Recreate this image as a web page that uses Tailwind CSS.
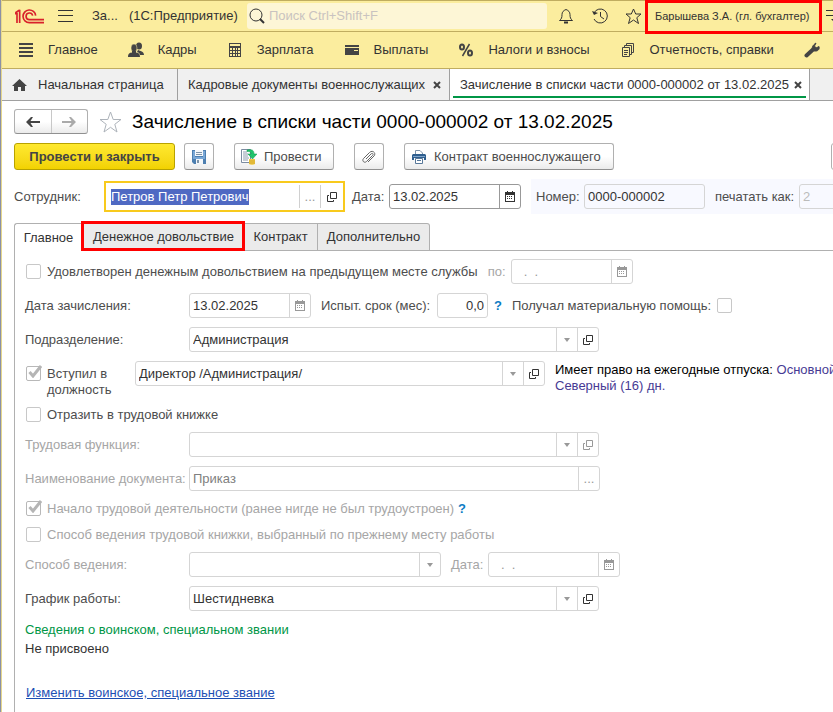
<!DOCTYPE html>
<html lang="ru">
<head>
  <meta charset="UTF-8">
  <meta name="viewport" content="width=device-width, initial-scale=1.0">
  <title>Зачисление в списки части 0000-000002 от 13.02.2025</title>
  <script src="https://cdn.jsdelivr.net/npm/@tailwindcss/browser@4"></script>
</head>
<body class="min-h-screen overflow-x-hidden bg-white font-['Liberation_Sans',Arial,sans-serif] text-[13px] leading-4 text-[#4d4d4d] whitespace-nowrap">

  <!-- Shared icons -->
  <svg class="hidden">
    <symbol id="open" viewBox="0 0 10 10"><path d="M3.5.5h6v6h-6zM2 3.5H.5v6h6V8" fill="none" stroke="currentColor"/></symbol>
    <symbol id="calendar" viewBox="0 0 10 11"><path fill="currentColor" fill-rule="evenodd" d="M0 1h2V0h1v1h4V0h1v1h2v10H0zM1 4v6h8V4zM2 5h1v1H2zM4 5h1v1H4zM6 5h1v1H6zM2 7h1v1H2zM4 7h1v1H4zM6 7h1v1H6z"/></symbol>
    <symbol id="caret" viewBox="0 0 6 4"><path d="M0 0h6L3 4z" fill="currentColor"/></symbol>
    <symbol id="check" viewBox="0 0 14 13"><path d="M1.500 7l3.500 4L13 1" fill="none" stroke="#b5b5b5" stroke-width="3"/></symbol>
    <symbol id="close" viewBox="0 0 8 8"><path d="M1 1l6 6M7 1L1 7" stroke="#444" stroke-width="2"/></symbol>
  </svg>

  <div class="min-h-screen border-l border-[#8b90a6]">
  <div class="min-h-screen border-l border-[#e5d78d]">

    <header class="flex h-8 items-center border-y border-[#c0ad60] bg-[#fbed9e] pl-[13px] text-[#333]">
      <svg class="w-[29px] h-[15px] shrink-0" viewBox="0 0 87 45" fill="none" stroke="#d8212b" stroke-width="5">
        <path d="M0 14h6v28M14 2v40M1 11L14 3"/>
        <path d="M62 20A19 19 0 1 0 43 41H87"/>
        <path d="M53 20A10 10 0 1 0 43 32H87"/>
      </svg>
      <button class="ml-3.5 shrink-0" aria-label="Меню">
        <svg class="w-[15px] h-3" viewBox="0 0 15 12" stroke="#333"><path d="M0 .5h15M0 5.500h15M0 11.500h15"/></svg>
      </button>
      <span class="ml-[19px]">За...</span>
      <span class="ml-[11px] w-[118px] shrink-0">(1С:Предприятие)</span>
      <label class="flex h-[26px] w-[300px] shrink-0 items-center rounded-[3px] bg-[#fdf6d6] pl-0.5">
        <svg class="size-4" viewBox="0 0 16 16" fill="none" stroke="#333"><circle cx="7" cy="7" r="6"/><path d="M11 11l4 4" stroke-width="2"/></svg>
        <input type="search" placeholder="Поиск Ctrl+Shift+F" class="ml-1 min-w-0 flex-1 bg-transparent outline-none placeholder:text-[#c9c3c0]">
      </label>
      <button class="ml-[11px] shrink-0" aria-label="Уведомления">
        <svg class="size-4" viewBox="0 0 16 16" fill="none" stroke="#333"><path d="M1.500 12.500C3.500 11 4 9.500 4 6.500 4 4 5.500 2.500 8 1.500c2.500 1 4 2.500 4 5 0 3 .5 4.500 2.500 6z"/><path d="M6 14.500h4" stroke-width="2"/></svg>
      </button>
      <button class="ml-[18px] shrink-0" aria-label="История">
        <svg class="w-[17px] h-4" viewBox="0 0 17 16" fill="none" stroke="#333"><path d="M2 5a7 7 0 1 1 0 6M8.500 4v4.500L12 11"/><path d="M0 3l2 4 4-2z" fill="#333" stroke="none"/></svg>
      </button>
      <button class="ml-4 shrink-0" aria-label="Избранное">
        <svg class="size-[17px]" viewBox="0 0 17 17" fill="none" stroke="#333"><path d="M8.500 1l2.200 5h5.300l-4.200 3.700L13.500 15.500l-5-3.500-5 3.500 1.700-5.800L1 6h5.300z"/></svg>
      </button>
      <button class="relative ml-[13px] w-[157px] shrink-0 text-left text-[11px]">Барышева З.А. (гл. бухгалтер)
        <span class="absolute -inset-x-[10px] -top-[8px] -bottom-[10px] border-3 border-[#f00]"></span>
      </button>
      <svg class="ml-[14px] w-4 h-3 shrink-0" viewBox="0 0 16 12" fill="#333"><path d="M0 0h16v1H0zM0 5h16v1H0zM5 9h6l-3 3z"/></svg>
    </header>

    <nav class="flex h-[37px] items-center gap-[30px] border-b border-[#c0ad60] bg-[#fbed9e] pl-4 text-[#333]">
      <a href="#" class="flex shrink-0 items-center gap-3.5">
        <svg class="size-4" viewBox="0 0 16 16" fill="#444"><path d="M1 1h14v2H1zM1 5h14v2H1zM1 9h14v2H1zM1 13h14v2H1z"/></svg>Главное</a>
      <a href="#" class="flex shrink-0 items-center gap-3.5">
        <svg class="size-4" viewBox="0 0 16 16" fill="#444"><ellipse cx="11" cy="4" rx="3" ry="3.500"/><path d="M10 8c2 1 6 1 6 5h-4c-.5-2-1-2.500-3-3z"/><ellipse cx="6" cy="6" rx="3" ry="4" stroke="#fbed9e" stroke-width=".5"/><path d="M4 9v1.500C2 11 0 11 0 15h12c0-4-2-4-4-4.500V9z"/></svg>Кадры</a>
      <a href="#" class="flex shrink-0 items-center gap-3.5">
        <svg class="size-4" viewBox="0 0 16 16"><path d="M2 1h12v14H2z" fill="#444"/><path d="M3 2h10v2H3zM3 6h2v2H3zM6 6h2v2H6zM9 6h1v2H9zM11 6h2v2h-2zM3 9h2v2H3zM6 9h2v2H6zM9 9h1v2H9zM11 9h2v2h-2zM3 12h2v2H3zM6 12h2v2H6zM9 12h1v2H9zM11 12h2v2h-2z" fill="#fbed9e"/></svg>Зарплата</a>
      <a href="#" class="flex shrink-0 items-center gap-3.5">
        <svg class="size-4" viewBox="0 0 16 16"><path d="M1 3h14v2H1zM1 6h14v7H1z" fill="#444"/><path d="M10 8h4v1h-4z" fill="#fbed9e"/></svg>Выплаты</a>
      <a href="#" class="flex shrink-0 items-center gap-3.5">
        <svg class="size-4" viewBox="0 0 16 16" fill="none" stroke="#444" stroke-width="2"><ellipse cx="4" cy="5" rx="2" ry="2.500"/><ellipse cx="12" cy="11" rx="2" ry="2.500"/><path d="M11.500 2l-7 12" stroke-width="1.500"/></svg>Налоги и взносы</a>
      <a href="#" class="flex shrink-0 items-center gap-3.5">
        <svg class="size-4" viewBox="0 0 16 16" fill="none" stroke="#444"><path d="M2.500 5.500h7v9h-7zM4.500 5V3.500h7v9H10M6.500 3V1.500h7v9H12M4 8.500h4M4 10.500h4M4 12.500h3"/></svg>Отчетность, справки</a>
      <a href="#" class="shrink-0" aria-label="Настройка">
        <svg class="size-4" viewBox="0 0 16 16"><path d="M2.500 13.500L9 7.500" stroke="#444" stroke-width="4" stroke-linecap="round"/><path d="M12 1L10.500 4l1.500 2 3-1.500c1 3-1.500 5-4.500 4.500S7 4 12 1z" fill="#444" stroke="#444"/></svg></a>
    </nav>

    <div class="flex h-8 border-b border-[#a0a0a0] bg-[#f0f0f0] text-[#333]">
      <button class="flex w-44 shrink-0 items-center gap-[11px] border-r border-[#a0a0a0] pl-2.5">
        <svg class="w-[15px] h-3" viewBox="0 0 15 12" fill="#444"><path d="M7.500 0L15 7h-2v5H9V8H6v4H2V7H0z"/></svg>Начальная страница</button>
      <button class="flex w-[272px] shrink-0 items-center justify-between border-r border-[#a0a0a0] pl-2.5 pr-2">Кадровые документы военнослужащих<svg class="size-2"><use href="#close"/></svg></button>
      <button class="flex w-[360px] shrink-0 border-r border-[#a0a0a0] bg-white px-[3px] pb-0.5">
        <span class="flex h-full w-full items-center justify-between border-b-2 border-[#009646] pl-[7px] pr-1 pt-1">Зачисление в списки части 0000-000002 от 13.02.2025<svg class="size-2"><use href="#close"/></svg></span>
      </button>
    </div>

    <main class="pl-3 pt-2">
      <div class="flex items-center">
        <div class="flex h-[25px] w-[74px] shrink-0 rounded-[3px] border border-[#b0b0b0] border-b-[#909090] bg-linear-to-b from-white from-50% to-[#ebebeb]">
          <button class="flex flex-1 items-center justify-center border-r border-[#c8c8c8] text-[#444]" aria-label="Назад"><svg class="w-3.5 h-2.5" viewBox="0 0 14 10" fill="currentColor"><path d="M0 5l5-5h2L4.500 4H14v2H4.500L7 10H5z"/></svg></button>
          <button class="flex flex-1 items-center justify-center text-[#aaa]" aria-label="Вперед"><svg class="w-3.5 h-2.5" viewBox="0 0 14 10" fill="currentColor"><path d="M14 5L9 0H7l2.500 4H0v2h9.500L7 10h2z"/></svg></button>
        </div>
        <svg class="ml-[11px] w-[23px] h-[22px] shrink-0" viewBox="0 0 23 22" fill="none" stroke="#adb3ba"><path d="M11.500 1l2.700 7.500H22l-6.200 4.800L18 21l-6.500-4.700L5 21l2.200-7.700L1 8.500h7.800z"/></svg>
        <h1 class="ml-2.5 text-[19px] leading-[25px] text-black">Зачисление в списки части 0000-000002 от 13.02.2025</h1>
      </div>

      <div class="mt-[9px] flex items-center">
        <button class="h-[27px] w-[161px] shrink-0 rounded-[3px] border border-[#b8a200] bg-linear-to-b from-[#ffe92e] to-[#f2d200] font-bold text-[#444]">Провести и закрыть</button>
        <button class="ml-[9px] flex h-[27px] w-[30px] shrink-0 items-center justify-center rounded-[3px] border border-[#b0b0b0] border-b-[#909090] bg-linear-to-b from-white from-50% to-[#ebebeb]" aria-label="Записать">
          <svg class="size-3.5" viewBox="0 0 14 14"><path d="M0 0h14v14H2l-2-2z" fill="#4d7fb0"/><path d="M1 1h2v6h8V1h2v8H1z" fill="#79a7d6"/><path d="M3 0h8v6H3zM4 9h7v5H4z" fill="#f4f7fa"/><path d="M4 2h6v1H4zM4 4h6v1H4zM5 10h2v3H5z" fill="#7d93a8"/></svg>
        </button>
        <button class="ml-5 flex h-[27px] w-[100px] shrink-0 items-center gap-[7px] rounded-[3px] border border-[#b0b0b0] border-b-[#909090] bg-linear-to-b from-white from-50% to-[#ebebeb] pl-1.5">
          <svg class="size-4" viewBox="0 0 16 16"><path d="M.5.5h9v13h-9z" fill="#fff" stroke="#7b8ca0"/><path d="M2 3h4M2 5h5M2 7h5M2 9h6M2 11h5" stroke="#8b9bad"/><path d="M6 1c5-1 7 0 7 4h3l-4.500 5L7 5h3c0-2-1-2.500-4-2.500z" fill="#1fc46b" stroke="#079447" stroke-width=".5"/><path d="M8 10h6v5c-1 1-5 1-6 0z" fill="#f0ca48"/><path d="M8 12h6M8 14h6" stroke="#c89c1c" stroke-width=".7"/></svg>
          Провести</button>
        <button class="ml-5 flex h-[27px] w-[30px] shrink-0 items-center justify-center rounded-[3px] border border-[#b0b0b0] border-b-[#909090] bg-linear-to-b from-white from-50% to-[#ebebeb]" aria-label="Файлы">
          <svg class="size-3.5" viewBox="0 0 14 14" fill="none" stroke="#666"><path d="M4 9l5-5c1.500-1.500 3 0 1.500 1.500l-6 6c-2 2-5-.5-3-3l6-6c3-3 7 .5 4.500 3.500l-6 6"/></svg>
        </button>
        <button class="ml-5 flex h-[27px] w-[210px] shrink-0 items-center gap-2 rounded-[3px] border border-[#b0b0b0] border-b-[#909090] bg-linear-to-b from-white from-50% to-[#ebebeb] pl-[7px]">
          <svg class="size-3.5" viewBox="0 0 14 14"><path d="M3.500 5V.5H8L10.500 3v2" fill="#fff" stroke="#7c93aa"/><path d="M1 4h12l1 1v5h-2V8H2v2H0V5z" fill="#2f5f8f"/><path d="M1 6h12v1H1z" fill="#7fa5cb"/><path d="M3.500 8.500h7v5h-7z" fill="#fff" stroke="#58789a"/><path d="M5 10.500h4" stroke="#58789a"/></svg>
          Контракт военнослужащего</button>
        <button class="ml-[217px] h-[27px] w-[30px] shrink-0 rounded-[3px] border border-[#b0b0b0]" aria-label="Еще"></button>
      </div>

      <div class="mt-[9px] flex h-[35px] items-center">
        <label for="employee" class="w-[90px] shrink-0">Сотрудник:</label>
        <div class="flex h-[31px] w-[241px] shrink-0 items-center border-2 border-[#f8ca1d] text-[#333]">
          <input id="employee" value="Петров Петр Петрович" class="min-w-0 flex-1 pl-[5px] outline-none selection:bg-[#4f69c3] selection:text-white">
          <button class="h-[23px] w-[21px] border-l border-[#d0d0d0] text-[#999]">...</button>
          <button class="flex h-[23px] w-[23px] items-center justify-center border-l border-[#d0d0d0]" aria-label="Открыть"><svg class="size-2.5"><use href="#open"/></svg></button>
        </div>
        <label for="date" class="ml-[7px] w-[37px] shrink-0">Дата:</label>
        <div class="flex h-[25px] w-[132px] shrink-0 rounded-[3px] border border-[#999] text-[#333]">
          <input id="date" value="13.02.2025" class="min-w-0 flex-1 pl-[3px] outline-none">
          <button class="flex w-[21px] items-center justify-center border-l border-[#999]" aria-label="Календарь"><svg class="w-2.5 h-[11px]"><use href="#calendar"/></svg></button>
        </div>
        <div class="ml-2.5 flex h-full min-w-0 flex-1 items-center overflow-hidden bg-[#f8f9ff] pl-[5px]">
          <label for="number" class="w-12 shrink-0">Номер:</label>
          <input id="number" value="0000-000002" readonly class="h-[25px] w-[121px] shrink-0 rounded-[3px] border border-[#d5d5d5] pl-[3px] text-[#333] outline-none">
          <label for="printas" class="ml-2.5 w-[84px] shrink-0">печатать как:</label>
          <input id="printas" value="2" disabled class="h-[25px] w-[121px] shrink-0 rounded-[3px] border border-[#d5d5d5] pl-[3px] text-[#bbb]">
        </div>
      </div>

      <div class="mt-[9px] flex h-7 text-[#333]">
        <button class="w-[69px] shrink-0 rounded-tl-[3px] border border-b-0 border-[#b0b0b0] border-r-transparent bg-white">Главное</button>
        <button class="relative w-[161px] shrink-0 border border-[#b0b0b0] bg-[#ebebeb]">Денежное довольствие
          <span class="absolute -left-[3px] -right-0.5 -top-[3px] -bottom-px border-3 border-[#f00]"></span>
        </button>
        <button class="w-[74px] shrink-0 border border-l-0 border-[#b0b0b0] bg-[#ebebeb]">Контракт</button>
        <button class="w-[112px] shrink-0 rounded-tr-[3px] border border-l-0 border-[#b0b0b0] bg-[#ebebeb]">Дополнительно</button>
        <div class="flex-1 border-b border-[#b0b0b0]"></div>
      </div>

      <section class="flex flex-col gap-[9px] border-l border-[#b0b0b0] pb-5 pl-2.5 pt-2">
        <div class="flex h-[25px] items-center">
          <label class="flex shrink-0 items-center gap-1.5 pl-px"><input type="checkbox" class="size-[15px] appearance-none rounded-[2px] border border-[#c8c8c8]">Удовлетворен денежным довольствием на предыдущем месте службы</label>
          <label for="until" class="ml-2.5 w-[23px] shrink-0 text-[#a6a6a6]">по:</label>
          <div class="flex h-[25px] w-[122px] shrink-0 rounded-[3px] border border-[#d5d5d5] text-[#999]">
            <input id="until" value=".  ." class="min-w-0 flex-1 pl-3 whitespace-pre outline-none">
            <button class="flex w-[21px] items-center justify-center border-l border-[#d5d5d5]" aria-label="Календарь"><svg class="w-2.5 h-[11px]"><use href="#calendar"/></svg></button>
          </div>
        </div>

        <div class="flex h-[25px] items-center">
          <label for="enrolled" class="w-[164px] shrink-0">Дата зачисления:</label>
          <div class="flex h-[25px] w-[122px] shrink-0 rounded-[3px] border border-[#d5d5d5] text-[#333]">
            <input id="enrolled" value="13.02.2025" class="min-w-0 flex-1 pl-[3px] outline-none">
            <button class="flex w-[21px] items-center justify-center border-l border-[#d5d5d5] text-[#999]" aria-label="Календарь"><svg class="w-2.5 h-[11px]"><use href="#calendar"/></svg></button>
          </div>
          <label for="trial" class="ml-2.5 w-[116px] shrink-0">Испыт. срок (мес):</label>
          <input id="trial" value="0,0" class="h-[25px] w-[51px] shrink-0 rounded-[3px] border border-[#d5d5d5] pr-[3px] text-right text-[#333] outline-none">
          <button class="ml-[6px] w-[18px] shrink-0 text-left font-bold text-[#0d7cc4]">?</button>
          <label for="aid" class="w-[205px] shrink-0">Получал материальную помощь:</label>
          <input id="aid" type="checkbox" class="size-[15px] shrink-0 appearance-none rounded-[2px] border border-[#c8c8c8]">
        </div>

        <div class="flex h-[25px] items-center">
          <label for="division" class="w-[164px] shrink-0">Подразделение:</label>
          <div class="flex h-[25px] w-[410px] shrink-0 rounded-[3px] border border-[#d5d5d5] text-[#333]">
            <input id="division" value="Администрация" class="min-w-0 flex-1 pl-[3px] outline-none">
            <button class="flex w-[21px] items-center justify-center border-l border-[#d5d5d5] text-[#999]" aria-label="Выбрать"><svg class="w-1.5 h-1"><use href="#caret"/></svg></button>
            <button class="flex w-[21px] items-center justify-center border-l border-[#d5d5d5]" aria-label="Открыть"><svg class="size-2.5"><use href="#open"/></svg></button>
          </div>
        </div>

        <div class="flex h-9 items-start">
          <label class="relative flex w-[110px] shrink-0 gap-1.5 pl-px pt-[5px]"><input type="checkbox" checked disabled class="size-[15px] shrink-0 appearance-none rounded-[2px] border border-[#b8b8b8]"><svg class="absolute left-[3px] top-1 h-[13px] w-3.5"><use href="#check"/></svg><span>Вступил в<br>должность</span></label>
          <div class="flex h-[25px] w-[410px] shrink-0 rounded-[3px] border border-[#d5d5d5] text-[#333]">
            <input aria-label="Должность" value="Директор /Администрация/" class="min-w-0 flex-1 pl-[3px] outline-none">
            <button class="flex w-[21px] items-center justify-center border-l border-[#d5d5d5] text-[#999]" aria-label="Выбрать"><svg class="w-1.5 h-1"><use href="#caret"/></svg></button>
            <button class="flex w-[21px] items-center justify-center border-l border-[#d5d5d5]" aria-label="Открыть"><svg class="size-2.5"><use href="#open"/></svg></button>
          </div>
          <p class="ml-2.5 pt-px text-[#473a94]"><span class="text-black">Имеет право на ежегодные отпуска:</span> Основной<br>Северный (16) дн.</p>
        </div>

        <label class="flex h-[17px] items-center gap-1.5 pl-px"><input type="checkbox" class="size-[15px] appearance-none rounded-[2px] border border-[#c8c8c8]">Отразить в трудовой книжке</label>

        <div class="flex h-[25px] items-center text-[#a6a6a6]">
          <label for="function" class="w-[164px] shrink-0">Трудовая функция:</label>
          <div class="flex h-[25px] w-[410px] shrink-0 rounded-[3px] border border-[#d5d5d5] text-[#999]">
            <input id="function" disabled class="min-w-0 flex-1 pl-[3px]">
            <button class="flex w-[21px] items-center justify-center border-l border-[#d5d5d5]" aria-label="Выбрать"><svg class="w-1.5 h-1"><use href="#caret"/></svg></button>
            <button class="flex w-[21px] items-center justify-center border-l border-[#d5d5d5]" aria-label="Открыть"><svg class="size-2.5"><use href="#open"/></svg></button>
          </div>
        </div>

        <div class="flex h-[25px] items-center text-[#a6a6a6]">
          <label for="document" class="w-[164px] shrink-0">Наименование документа:</label>
          <div class="flex h-[25px] w-[411px] shrink-0 rounded-[3px] border border-[#d5d5d5] text-[#808080]">
            <input id="document" value="Приказ" disabled class="min-w-0 flex-1 pl-[3px]">
            <button class="w-[21px] border-l border-[#d5d5d5] text-[#999]">...</button>
          </div>
        </div>

        <div class="flex h-[17px] items-center text-[#a6a6a6]">
          <label class="relative flex shrink-0 items-center gap-1.5 pl-px"><input type="checkbox" checked disabled class="size-[15px] appearance-none rounded-[2px] border border-[#b8b8b8]"><svg class="absolute left-[3px] -top-px h-[13px] w-3.5"><use href="#check"/></svg>Начало трудовой деятельности (ранее нигде не был трудоустроен)</label>
          <button class="ml-1 font-bold text-[#0d7cc4]">?</button>
        </div>

        <label class="flex h-[17px] items-center gap-1.5 pl-px text-[#a6a6a6]"><input type="checkbox" disabled class="size-[15px] appearance-none rounded-[2px] border border-[#c8c8c8]">Способ ведения трудовой книжки, выбранный по прежнему месту работы</label>

        <div class="flex h-[25px] items-center text-[#a6a6a6]">
          <label for="method" class="w-[164px] shrink-0">Способ ведения:</label>
          <div class="flex h-[25px] w-[252px] shrink-0 rounded-[3px] border border-[#d5d5d5] text-[#999]">
            <input id="method" disabled class="min-w-0 flex-1 pl-[3px]">
            <button class="flex w-[21px] items-center justify-center border-l border-[#d5d5d5]" aria-label="Выбрать"><svg class="w-1.5 h-1"><use href="#caret"/></svg></button>
          </div>
          <label for="methoddate" class="ml-2.5 w-[37px] shrink-0">Дата:</label>
          <div class="flex h-[25px] w-[132px] shrink-0 rounded-[3px] border border-[#d5d5d5] text-[#999]">
            <input id="methoddate" value=".  ." disabled class="min-w-0 flex-1 pl-3 whitespace-pre">
            <button class="flex w-[21px] items-center justify-center border-l border-[#d5d5d5]" aria-label="Календарь"><svg class="w-2.5 h-[11px]"><use href="#calendar"/></svg></button>
          </div>
        </div>

        <div class="flex h-[25px] items-center">
          <label for="schedule" class="w-[164px] shrink-0">График работы:</label>
          <div class="flex h-[25px] w-[410px] shrink-0 rounded-[3px] border border-[#d5d5d5] text-[#333]">
            <input id="schedule" value="Шестидневка" class="min-w-0 flex-1 pl-[3px] outline-none">
            <button class="flex w-[21px] items-center justify-center border-l border-[#d5d5d5] text-[#999]" aria-label="Выбрать"><svg class="w-1.5 h-1"><use href="#caret"/></svg></button>
            <button class="flex w-[21px] items-center justify-center border-l border-[#d5d5d5]" aria-label="Открыть"><svg class="size-2.5"><use href="#open"/></svg></button>
          </div>
        </div>

        <div class="leading-[19px]">
          <h2 class="text-[#009646]">Сведения о воинском, специальном звании</h2>
          <p class="text-[#333]">Не присвоено</p>
        </div>

        <div class="pl-px pt-[18px]"><a href="#" class="text-[#1d4fb4] underline">Изменить воинское, специальное звание</a></div>
      </section>
    </main>
  </div>
  </div>

  <script>
    const employee = document.getElementById('employee');
    employee.focus({ preventScroll: true });
    employee.select();
  </script>

</body>
</html>
